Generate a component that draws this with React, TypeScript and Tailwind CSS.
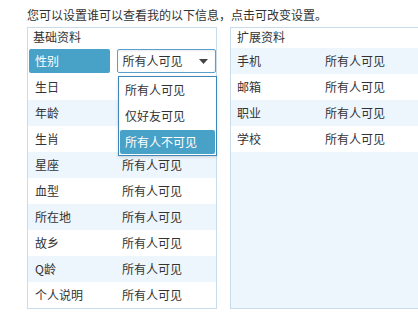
const font = { fontFamily: '"Microsoft YaHei", "Noto Sans CJK SC", "Noto Sans", sans-serif' };

export default function App() {
  const basic = ['性别', '生日', '年龄', '生肖', '星座', '血型', '所在地', '故乡', 'Q龄', '个人说明'];
  const extra = ['手机', '邮箱', '职业', '学校'];
  const options = ['所有人可见', '仅好友可见', '所有人不可见'];

  return (
    <div className="w-[418px] h-[318px] overflow-hidden bg-white text-[12px] text-[#333]" style={font}>
      <div className="relative pl-[27px] pt-[6px]">
        <div className="h-[21px] leading-[18px]">您可以设置谁可以查看我的以下信息，点击可改变设置。</div>

        <div className="flex gap-[13px]">
          {/* 基础资料 */}
          <div className="w-[190px] shrink-0 border border-[#c9dceb] bg-white">
            <div className="h-[20px] pl-[5px] leading-[18px]">基础资料</div>
            {basic.map((label, i) => (
              <div
                key={label}
                className={`h-[26px] flex items-center ${i > 0 && i % 2 === 0 ? 'bg-[#edf6fc]' : 'bg-white'}`}
              >
                {i === 0 ? (
                  <>
                    <div className="ml-px w-[81px] h-[24px] rounded-[2px] bg-[#48a1c6] text-white flex items-center pl-[6px]">
                      {label}
                    </div>
                    <div className="ml-[7px] w-[100px] h-[24px] border border-[#5b9fcf] bg-white rounded-[2px] flex items-center pl-[5px] pr-[7px] justify-between shadow-[inset_0_1px_2px_rgba(0,0,0,0.08)]">
                      <span>所有人可见</span>
                      <svg width="9" height="5" viewBox="0 0 9 5">
                        <path d="M0 0 H9 L4.5 5 Z" fill="#444" />
                      </svg>
                    </div>
                  </>
                ) : (
                  <>
                    <div className="w-[94px] pl-[7px]">{label}</div>
                    <div>所有人可见</div>
                  </>
                )}
              </div>
            ))}
          </div>

          {/* 扩展资料 */}
          <div className="w-[220px] shrink-0 border border-[#c9dceb] bg-[#edf6fc]">
            <div className="h-[20px] pl-[6px] leading-[18px] bg-white">扩展资料</div>
            {extra.map((label, i) => (
              <div key={label} className={`h-[26px] flex items-center ${i % 2 === 0 ? 'bg-[#edf6fc]' : 'bg-white'}`}>
                <div className="w-[94px] pl-[6px]">{label}</div>
                <div>所有人可见</div>
              </div>
            ))}
          </div>
        </div>

        {/* 下拉选项 */}
        <div className="absolute left-[118px] top-[76px] w-[99px] border border-[#3f87ba] bg-white shadow-[0_1px_3px_rgba(0,0,0,0.15)]">
          {options.map((opt, i) => (
            <div key={opt} className="h-[26px] flex items-center px-px">
              <div
                className={`w-full h-[24px] flex items-center pl-[5px] rounded-[2px] ${
                  i === 2 ? 'bg-[#48a1c6] text-white' : ''
                }`}
              >
                {opt}
              </div>
            </div>
          ))}
        </div>
      </div>
    </div>
  );
}
